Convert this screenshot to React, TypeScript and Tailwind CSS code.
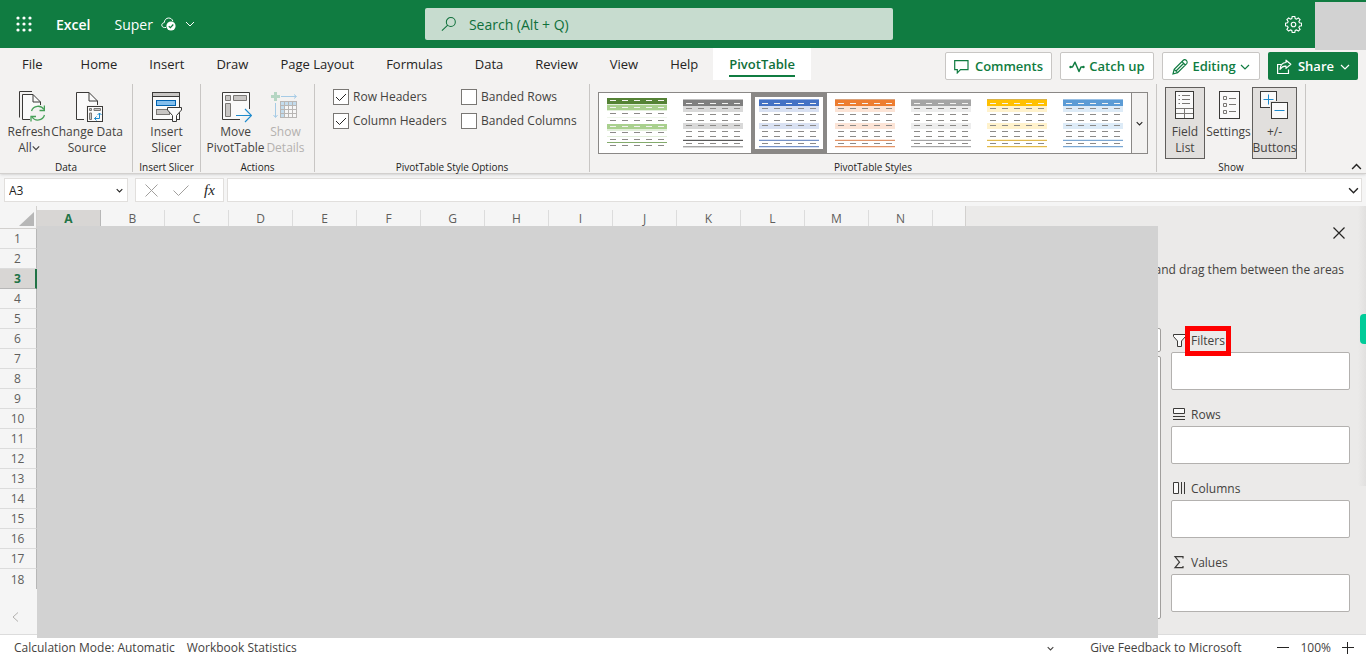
import React from "react";

const columns = ["A", "B", "C", "D", "E", "F", "G", "H", "I", "J", "K", "L", "M", "N"];
const rows = Array.from({ length: 18 }, (_, i) => i + 1);
const tabs = ["Home", "Insert", "Draw", "Page Layout", "Formulas", "Data", "Review", "View", "Help"];

const Chevron = ({ size = 10, width = 1, up = false }: { size?: number; width?: number; up?: boolean }) => (
  <svg width={size} height={size} viewBox="0 0 10 10" fill="none" stroke="currentColor" strokeWidth={width} className="shrink-0">
    <path d={up ? "M1 7.2 5 3.2 9 7.2" : "M1 3 5 7 9 3"} />
  </svg>
);

/* ---------- top bar ---------- */

const Header = () => (
  <header className="relative z-20 grid h-12 shrink-0 grid-cols-[425fr_468fr_473fr] items-center bg-[#107c41] text-white">
    <div className="flex items-center pl-4">
      <button aria-label="App launcher" className="mr-6">
        <svg width="16" height="16" viewBox="0 0 16 16" fill="white">
          {[2, 8, 14].map((y) =>
            [2, 8, 14].map((x) => <circle key={`${x}-${y}`} cx={x} cy={y} r="1.6" />)
          )}
        </svg>
      </button>
      <span className="mr-6 text-[14px] font-semibold">Excel</span>
      <button className="flex items-center text-[14px]">
        Super
        <svg className="ml-2" width="16" height="16" viewBox="0 0 16 16" fill="none">
          <path d="M5 11.5H3.4C1.8 11.5.8 10.4.8 9.1c0-1.4 1-2.3 2.4-2.4C3.4 4 5.2 2 7.700 2c2 0 3.600 1.200 4.200 3.200" stroke="white" />
          <circle cx="10" cy="10" r="4.6" fill="white" />
          <path d="M7.8 10.2 9.4 11.7 12.3 8.5" stroke="#107c41" strokeWidth="1.2" />
        </svg>
        <span className="ml-2">
          <Chevron />
        </span>
      </button>
    </div>
    <label className="flex h-8 items-center gap-3 rounded-xs bg-[#c7dccf] px-4 text-[#0f703b]">
      <svg width="17" height="16" viewBox="0 0 17 16" fill="none" stroke="currentColor" strokeWidth="1.1">
        <circle cx="10.5" cy="5.8" r="4.8" />
        <path d="M7.2 9.3 1 15.2" />
      </svg>
      <input
        aria-label="Search"
        placeholder="Search (Alt + Q)"
        className="w-full bg-transparent text-[14px] outline-none placeholder:text-[#0f703b]"
      />
    </label>
    <div className="flex justify-end pr-16">
      <button aria-label="Settings">
        <svg width="17" height="17" viewBox="0 0 24 24" fill="none" stroke="white" strokeWidth="1.6">
          <path d="M10.2 1.500h3.600l.6 3 1.800.8 2.600-1.700 2.500 2.500-1.700 2.600.8 1.800 3 .6v3.600l-3 .6-.8 1.800 1.700 2.600-2.500 2.500-2.600-1.700-1.800.8-.6 3h-3.600l-.6-3-1.800-.8-2.600 1.700-2.500-2.500 1.700-2.600-.8-1.800-3-.6v-3.600l3-.6.8-1.800-1.700-2.600 2.500-2.500 2.600 1.700 1.800-.8z" transform="translate(0 -.9)" />
          <circle cx="12" cy="12" r="3.2" />
        </svg>
      </button>
    </div>
    <div className="absolute top-0.5 right-0 h-12 w-[51px] bg-[#d2d2d2]" />
  </header>
);

const TabRow = () => (
  <div className="flex h-[34px] items-start text-[#252423]">
    <nav className="flex h-8 text-[13px]">
      <button className="pt-0.5 pr-[22px] pl-[22px]">File</button>
      {tabs.map((t) => (
        <button key={t} className="px-4 pt-0.5 whitespace-nowrap">
          {t}
        </button>
      ))}
      <button className="-ml-px bg-white px-4 font-semibold text-[#0f703b]">
        <span className="inline-block border-b-2 border-[#107c41] pt-1">PivotTable</span>
      </button>
    </nav>
    <div className="ml-auto flex gap-2 pt-1 pr-2 text-[13px] font-semibold text-[#107c41]">
      <button className="flex h-7 w-[107px] items-center justify-center gap-1.5 rounded-xs border border-[#c8c6c4] bg-white pt-px">
        <svg width="15" height="14" viewBox="0 0 15 14" fill="none" stroke="currentColor" strokeWidth="1.2">
          <path d="M.7.7H14v9H6.500L3.300 12.900V9.700H.7z" />
        </svg>
        Comments
      </button>
      <button className="flex h-7 w-[94px] items-center justify-center gap-1 rounded-xs border border-[#c8c6c4] bg-white pt-px whitespace-nowrap">
        <svg width="16" height="12" viewBox="0 0 16 12" fill="none" stroke="currentColor" strokeWidth="1.5">
          <path d="M1.5 6H3.500L6 1.200 10 10.500 12 6H14" strokeLinejoin="round" />
          <circle cx="1.5" cy="6" r="1.2" fill="currentColor" stroke="none" />
          <circle cx="14.5" cy="6" r="1.2" fill="currentColor" stroke="none" />
        </svg>
        Catch up
      </button>
      <button className="flex h-7 w-[98px] items-center justify-center gap-1 rounded-xs border border-[#c8c6c4] bg-white pt-px">
        <svg width="16" height="16" viewBox="0 0 16 16" fill="none" stroke="currentColor" strokeWidth="1.2">
          <path d="M1 15 2.2 10.3 11.3 1.3C12.1.5 13.3.5 14.2 1.3S15.4 3.8 14.7 4.6L5.6 13.7zM10 2.700 13.300 6M2.200 10.300 5.600 13.700M4 12 12 4" />
        </svg>
        Editing
        <Chevron width={1.2} />
      </button>
      <button className="flex h-7 w-[90px] items-center justify-center gap-1.5 rounded-xs bg-[#107c41] pt-px text-white">
        <svg width="16" height="16" viewBox="0 0 16 16" fill="none" stroke="currentColor" strokeWidth="1.2">
          <path d="M5 5.5H1.600V14.500H12.500V10.500" />
          <path d="M10 1.2 14.8 5.3 10 9.4V7.2C7.5 7 5.5 8.2 4 10.3 4.3 6.5 6.5 3.7 10 3.5z" strokeLinejoin="round" />
        </svg>
        Share
        <Chevron width={1.2} />
      </button>
    </div>
  </div>
);

/* ---------- ribbon icons ---------- */

const Icon = ({ children }: { children: React.ReactNode }) => (
  <svg width="32" height="32" viewBox="0 0 32 32" fill="none" stroke="#3b3a38" className="mb-px shrink-0">
    {children}
  </svg>
);

const RefreshIcon = () => (
  <Icon>
    <path d="M6.5 26.5V.5H19" />
    <path d="M17 28.5H9.500V3.500H20L27.500 11V14" fill="#fafafa" />
    <path d="M20 3.500V11H27.500" />
    <circle cx="25" cy="22" r="8" fill="#f3f2f1" stroke="none" />
    <path d="M18.5 20A7 7 0 0 1 31 18.500M31.500 24A7 7 0 0 1 19 26" stroke="#46a058" strokeWidth="1.3" />
    <path d="M31.400 14.500V19.500H26.500M18 30.500V25.500H23" stroke="#46a058" strokeWidth="1.3" />
  </Icon>
);

const SourceIcon = () => (
  <Icon>
    <path d="M13 28.500H5.500V1.500H18L26.500 10V14" fill="#fafafa" />
    <path d="M18 1.500V10H26.500" />
    <rect x="15" y="14" width="17" height="18" fill="#f3f2f1" stroke="none" />
    <rect x="16.500" y="15.500" width="15" height="15" fill="#fafafa" />
    <path d="M18.500 17.500H20.500V19.500H18.500zM23 17.500H29.500V19.500H23zM18.500 22H20.500V28.500H18.500z" fill="#c8c6c4" stroke="#797774" />
    <path d="M23.500 27.500H28.500V22M25.500 25.500 23.500 27.500 25.500 29.500M26.500 24 28.500 22 30.500 24" stroke="#1e8bcd" />
  </Icon>
);

const SlicerIcon = () => (
  <Icon>
    <rect x="1.500" y="1.500" width="27" height="27" fill="#fafafa" />
    <rect x="1.500" y="1.500" width="27" height="4" fill="#c8c6c4" />
    <rect x="5.500" y="9.500" width="19" height="5" fill="#83beec" stroke="#0063b1" />
    <rect x="5.500" y="18.500" width="13" height="5" fill="#c8c6c4" stroke="#797774" />
    <path d="M16.500 16.500H30.500V19L25.500 24.500V30.500H21.500V24.500L16.500 19z" fill="#fafafa" />
  </Icon>
);

const MoveIcon = () => (
  <Icon>
    <path d="M20 28.500H2.500V1.500H29.500V18" fill="#fafafa" />
    <path d="M5.500 4.500H10.500V9.500H5.500zM13.500 4.500H26.500V9.500H13.500zM5.500 12.500H10.500V25.500H5.500z" fill="#c8c6c4" stroke="#797774" />
    <path d="M16 24.500H31M25 18 31.500 24.500 25 31" stroke="#1e8bcd" strokeWidth="1.2" />
  </Icon>
);

const DetailsIcon = () => (
  <Icon>
    <path d="M5.500 1V10M1 5.500H10" stroke="#b5d6c3" strokeWidth="3" />
    <path d="M11 5.500H26M24 3.500 26.500 5.500 24 7.500M5.500 12V26M3.500 24 5.500 26.500 7.500 24" stroke="#a5cbe6" />
    <rect x="10.500" y="10.500" width="16" height="16" fill="#f7f7f7" stroke="#b8b6b4" />
    <path d="M11 11H14V26H11zM11 11H26V14H11z" fill="#c3dced" stroke="none" />
    <path d="M14.500 10V27M18.500 10V27M22.500 10V27M10 14.500H27M10 18.500H27M10 22.500H27" stroke="#b8b6b4" />
  </Icon>
);

const FieldListIcon = () => (
  <Icon>
    <rect x="6.500" y=".5" width="18" height="27" fill="#fafafa" />
    <path d="M9.500 4.500H11M13 4.500H21M9.500 8.500H11M13 8.500H21M9.500 12.500H11M13 12.500H21M7 17.500H24M7 22.500H24M15.500 18V27" stroke="#797774" />
  </Icon>
);

const SettingsIcon = () => (
  <Icon>
    <rect x="6.500" y=".5" width="20" height="27" fill="#fafafa" />
    <path d="M10.500 5.500H13.500V8.500H10.500zM16 7.500H23M10.500 12.500H13.500V15.500H10.500zM16 13.500H23M10.500 19.500H13.500V22.500H10.500zM16 20.500H23" stroke="#797774" />
  </Icon>
);

const PlusMinusIcon = () => (
  <Icon>
    <rect x="1.500" y=".5" width="16" height="16" fill="#fafafa" />
    <path d="M4.500 8.500H14.500M9.500 3.500V13.500" stroke="#1e8bcd" />
    <rect x="11" y="10" width="18" height="18" fill="#e1dfdd" stroke="none" />
    <rect x="12.500" y="11.500" width="16" height="16" fill="#fafafa" />
    <path d="M15.500 19.500H25.500" stroke="#1e8bcd" />
  </Icon>
);

/* ---------- ribbon ---------- */

type ButtonProps = {
  icon: React.ReactNode;
  lines: React.ReactNode[];
  width: string;
  pressed?: boolean;
  disabled?: boolean;
};

const RibbonButton = ({ icon, lines, width, pressed, disabled }: ButtonProps) => (
  <button
    disabled={disabled}
    className={`flex h-[72px] shrink-0 flex-col items-center border pt-[3px] text-[12px] leading-4 whitespace-nowrap ${width} ${
      pressed ? "border-[#605e5c] bg-[#e1dfdd]" : "border-transparent"
    } ${disabled ? "text-[#b3b1af]" : "text-[#444240]"}`}
  >
    {icon}
    {lines.map((l, i) => (
      <span key={i} className="flex items-center">
        {l}
      </span>
    ))}
  </button>
);

const Group = ({ label, width, children }: { label: string; width: string; children: React.ReactNode }) => (
  <section className={`flex h-[88px] shrink-0 flex-col border-r border-[#c8c6c4] ${width}`}>
    <div className="flex flex-1 justify-center pt-[3px]">{children}</div>
    <h2 className="text-center text-[10px] leading-[10px] text-[#252423]">{label}</h2>
  </section>
);

const Check = ({ label, checked }: { label: string; checked?: boolean }) => (
  <label className="flex h-6 items-center gap-1 text-[12px] text-[#444240]">
    <span className="relative flex">
      <input
        type="checkbox"
        defaultChecked={checked}
        className="peer size-4 appearance-none border border-[#797774] bg-white"
      />
      <svg className="absolute inset-0 hidden peer-checked:block" width="16" height="16" viewBox="0 0 16 16" fill="none" stroke="#252423">
        <path d="M3 8 6.500 11.500 13 5" />
      </svg>
    </span>
    {label}
  </label>
);

const Dashes = ({ y, color }: { y: number; color: string }) => (
  <path d={`M3 ${y}h6m6 0h6m6 0h6m6 0h6m6 0h6`} stroke={color} />
);

type Style = { head: string; top: string; band: string; line: string; last: string };

const styles: Style[] = [
  { head: "#7f7f7f", top: "#bfbfbf", band: "#d9d9d9", line: "#595959", last: "#a6a6a6" },
  { head: "#4472c4", top: "#8ea9db", band: "#d9e1f2", line: "#7491c6", last: "#7491c6" },
  { head: "#ed7d31", top: "#d9a27c", band: "#fce4d6", line: "#e09468", last: "#e09468" },
  { head: "#a5a5a5", top: "#c9c9c9", band: "#ededed", line: "#a5a5a5", last: "#a5a5a5" },
  { head: "#ffc000", top: "#d9b44a", band: "#fff2cc", line: "#dfb84c", last: "#dfb84c" },
  { head: "#5b9bd5", top: "#9bc2e6", band: "#ddebf7", line: "#7aa6d2", last: "#7aa6d2" },
];

const StylePreview = ({ s }: { s: Style }) => (
  <svg width="60" height="60" viewBox="0 0 60 60" className="shrink-0">
    <rect y="6" width="60" height="1" fill={s.top} />
    <rect y="7" width="60" height="6" fill={s.head} />
    <rect y="13" width="60" height="6" fill={s.band} />
    <rect y="30" width="60" height="6" fill={s.band} />
    <Dashes y={10.5} color="#f3f2f1" />
    {[15.5, 21.5, 27.5, 32.5, 38.5, 43.5, 50.5].map((y) => (
      <Dashes key={y} y={y} color="#8c8a88" />
    ))}
    <rect y="46" width="60" height="1" fill={s.band} />
    <rect y="47" width="60" height="1" fill={s.line} />
    <rect y="53" width="60" height="1" fill={s.last} />
    <rect y="54" width="60" height="1" fill={s.band} />
  </svg>
);

const GreenPreview = () => (
  <svg width="60" height="60" viewBox="0 0 60 60" className="shrink-0">
    <rect y="5" width="60" height="6" fill="#548235" />
    <rect y="11" width="60" height="1" fill="#e2efda" />
    <rect y="12" width="60" height="5" fill="#a9d08e" />
    <rect y="17" width="60" height="1" fill="#e2efda" />
    <rect y="24" width="60" height="1" fill="#eef5ea" />
    <rect y="31" width="60" height="5" fill="#a9d08e" />
    <rect y="36" width="60" height="2" fill="#e2efda" />
    <rect y="43" width="60" height="1" fill="#e2efda" />
    <rect y="49" width="60" height="1" fill="#84ab6c" />
    {[7.5, 14.5, 33.5].map((y) => (
      <Dashes key={y} y={y} color="#f3f2f1" />
    ))}
    {[20.5, 27.5, 39.5, 46.5, 52.5].map((y) => (
      <Dashes key={y} y={y} color="#8c8a88" />
    ))}
  </svg>
);

const Ribbon = () => (
  <div className="relative z-10 h-[126px] shrink-0 border-b border-[#d2d0ce] bg-[#f3f2f1] shadow-sm">
    <TabRow />
    <div className="flex pt-0.5">
      <Group label="Data" width="w-[133px]">
        <div className="mr-4 flex">
          <RibbonButton
            width="w-[58px]"
            icon={<RefreshIcon />}
            lines={["Refresh", <React.Fragment key="all">All<Chevron size={8} width={1.5} /></React.Fragment>]}
          />
          <RibbonButton width="w-[58px]" icon={<SourceIcon />} lines={["Change Data", "Source"]} />
        </div>
      </Group>
      <Group label="Insert Slicer" width="w-[68px]">
        <RibbonButton width="w-[50px]" icon={<SlicerIcon />} lines={["Insert", "Slicer"]} />
      </Group>
      <Group label="Actions" width="w-[114px]">
        <RibbonButton width="w-[56px]" icon={<MoveIcon />} lines={["Move", "PivotTable"]} />
        <RibbonButton width="w-[44px]" icon={<DetailsIcon />} lines={["Show", "Details"]} disabled />
      </Group>
      <Group label="PivotTable Style Options" width="w-[275px]">
        <div className="-mt-0.5 grid w-full grid-cols-[128px_1fr] content-start pl-[18px]">
          <Check label="Row Headers" checked />
          <Check label="Banded Rows" />
          <Check label="Column Headers" checked />
          <Check label="Banded Columns" />
        </div>
      </Group>
      <Group label="PivotTable Styles" width="w-[567px]">
        <div className="mt-[5px] flex h-[62px] border border-[#8a8886] bg-white">
          <button aria-label="Light green style" className="flex w-[76px] items-center justify-center">
            <GreenPreview />
          </button>
          {styles.map((s, i) => (
            <button key={s.head} aria-label={`Style ${i + 2}`} className="relative flex w-[76px] items-center justify-center">
              <StylePreview s={s} />
              {i === 1 && <span className="absolute inset-0 border-4 border-[#8a8886]" />}
            </button>
          ))}
          <button aria-label="More styles" className="flex w-4 items-center justify-center border-l border-[#8a8886] bg-[#f3f2f1] text-[#252423]">
            <Chevron size={7} width={1.5} />
          </button>
        </div>
      </Group>
      <Group label="Show" width="w-[149px]">
        <RibbonButton width="w-[40px]" icon={<FieldListIcon />} lines={["Field", "List"]} pressed />
        <RibbonButton width="w-[47px]" icon={<SettingsIcon />} lines={["Settings"]} />
        <RibbonButton width="w-[45px]" icon={<PlusMinusIcon />} lines={["+/-", "Buttons"]} pressed />
      </Group>
      <button aria-label="Collapse ribbon" className="mr-1 ml-auto self-end text-[#252423]">
        <Chevron size={11} width={1.3} up />
      </button>
    </div>
  </div>
);

/* ---------- sheet ---------- */

const FormulaBar = () => (
  <div className="flex h-8 shrink-0 items-center bg-[#f5f5f5] px-1 text-[#252423]">
    <div className="mr-[7px] flex h-6 w-[124px] items-center border border-[#e1dfdd] bg-white pr-1">
      <input aria-label="Name box" defaultValue="A3" className="w-full bg-transparent pt-0.5 pl-1 text-[12px] outline-none" />
      <Chevron size={7} width={1.5} />
    </div>
    <div className="mr-[3px] flex h-6 w-[89px] items-center gap-[15px] border border-[#e1dfdd] bg-white px-[9px] text-[#a19f9d]">
      <button aria-label="Cancel">
        <svg width="13" height="13" viewBox="0 0 13 13" fill="none" stroke="currentColor">
          <path d="M.5.5 12.500 12.500M12.500.5.5 12.500" />
        </svg>
      </button>
      <button aria-label="Enter">
        <svg width="16" height="13" viewBox="0 0 16 13" fill="none" stroke="currentColor">
          <path d="M.5 6.500 5.500 11.500 15.500 1.500" />
        </svg>
      </button>
      <button className="font-['Liberation_Serif',serif] text-[15px] leading-4 text-[#252423] italic">fx</button>
    </div>
    <div className="flex h-6 flex-1 items-center border border-[#e1dfdd] bg-white pr-0.5">
      <input aria-label="Formula" className="w-full bg-transparent px-1 text-[12px] outline-none" />
      <Chevron size={11} width={1.3} />
    </div>
  </div>
);

const Sheet = () => (
  <div className="flex min-w-0 flex-1 flex-col bg-[#f5f5f5]">
    <table className="w-full table-fixed border-separate border-spacing-0 text-[12px] text-[#605e5c]">
      <thead>
        <tr>
          <th className="h-[23px] w-[37px] border-r border-b border-[#d2d0ce] p-0">
            <svg className="mt-1 ml-auto" width="17" height="17" viewBox="0 0 17 17" fill="#b7b7b7">
              <path d="M15 1V15H0z" />
            </svg>
          </th>
          {columns.map((c) => (
            <th key={c} scope="col" className="w-16 p-0 pt-1">
              <div
                className={
                  c === "A"
                    ? "h-[19px] border-r border-[#b7b7b7] bg-[#d8d6d4] font-bold text-[#217346]"
                    : "h-[19px] border-r border-[#dcdcdc] font-normal"
                }
              >
                {c}
              </div>
            </th>
          ))}
          <th className="p-0" />
        </tr>
      </thead>
      <tbody>
        {rows.map((r) => (
          <tr key={r}>
            <th
              scope="row"
              className={
                r === 3
                  ? "h-5 border-r-2 border-b border-b-[#b7b7b7] border-r-[#217346] bg-[#d8d6d4] p-0 pt-px leading-4 font-bold text-[#217346]"
                  : `h-5 border-r border-r-[#b7b7b7] p-0 pt-px pr-px leading-4 font-normal ${r < 18 ? "border-b border-b-[#dcdcdc]" : ""}`
              }
            >
              {r}
            </th>
            <td colSpan={15} className="p-0" />
          </tr>
        ))}
      </tbody>
    </table>
    <button aria-label="Previous sheet" className="mt-[22px] ml-2.5 self-start text-[#b3b1af]">
      <svg width="11" height="12" viewBox="0 0 11 12" fill="none" stroke="currentColor">
        <path d="M8 1.500 3 6 8 10.500" />
      </svg>
    </button>
  </div>
);

const areas = [
  {
    name: "Filters",
    icon: <path d="M.5.5H12.500V2.500L8.500 7V12.500H4.500V7L.5 2.500z" fill="#fafafa" />,
  },
  {
    name: "Rows",
    icon: <path d="M.5.5H11.500V5.500H.5zM0 8.500H12M0 11.500H12" fill="#fafafa" />,
  },
  {
    name: "Columns",
    icon: <path d="M.5.5H5.500V11.500H.5zM8.500 0V12M11.500 0V12" fill="#fafafa" />,
  },
  {
    name: "Values",
    icon: <path d="M10 2.500V.7H2L6.500 6.200 2 11.700H10V10" strokeWidth="1.2" />,
  },
];

const FieldPane = () => (
  <aside className="relative flex w-[401px] shrink-0 flex-col border-l border-[#d2d0ce] bg-[#ebeae9] pr-4 text-[12px] text-[#444240]">
    <button aria-label="Close" className="mt-[21px] mr-[5px] self-end">
      <svg width="12" height="12" viewBox="0 0 12 12" fill="none" stroke="#252423" strokeWidth="1.2">
        <path d="M.5.5 11.500 11.500M11.500.5.5 11.500" />
      </svg>
    </button>
    <p className="mt-[23px] mr-1.5 text-right leading-4">t and drag them between the areas</p>
    <div className="mt-[50px] flex gap-2.5 pl-4">
      <div className="flex flex-1 flex-col gap-1">
        <input aria-label="Search fields" className="h-6 rounded-xs border border-[#a19f9d] bg-white px-2" />
        <div className="h-[263px] rounded-xs border border-[#a19f9d] bg-white" />
      </div>
      <div className="flex w-[179px] flex-col gap-3">
        {areas.map((a) => (
          <section key={a.name}>
            <h3 className="flex h-6 items-center gap-[5px] pt-px pl-0.5 font-medium">
              <svg width="13" height="13" viewBox="0 0 13 13" fill="none" stroke="#3b3a38">
                {a.icon}
              </svg>
              <span className="relative">
                {a.name}
                {a.name === "Filters" && <span className="absolute -inset-1.5 border-[5px] border-[#ff0000]" />}
              </span>
            </h3>
            <div className="h-[38px] rounded-xs border border-[#b3b1af] bg-white" />
          </section>
        ))}
      </div>
    </div>
    <div className="absolute top-0 right-0 h-[280px] w-2 bg-linear-to-r from-transparent to-[#e1e0df]" />
    <button aria-label="Open assistant" className="absolute top-[108px] right-0 h-[30px] w-1.5 rounded-l bg-[#00cc99]" />
  </aside>
);

const StatusBar = () => (
  <footer className="flex h-[22px] shrink-0 items-center bg-white pt-1 pr-3 pl-3.5 text-[12px] text-[#444240]">
    <button className="mr-3">Calculation Mode: Automatic</button>
    <button>Workbook Statistics</button>
    <div className="ml-auto flex items-center">
      <button aria-label="More status options" className="mr-9">
        <Chevron size={7} width={1.5} />
      </button>
      <a href="#feedback" className="mr-9">
        Give Feedback to Microsoft
      </a>
      <button aria-label="Zoom out">
        <svg width="12" height="12" viewBox="0 0 12 12" stroke="#252423">
          <path d="M0 5.500H12" />
        </svg>
      </button>
      <span className="mx-[11px]">100%</span>
      <button aria-label="Zoom in">
        <svg width="12" height="12" viewBox="0 0 12 12" stroke="#252423">
          <path d="M0 5.500H12M5.500 0V12" />
        </svg>
      </button>
    </div>
  </footer>
);

const App = () => {
  return (
    <div className="flex h-screen flex-col overflow-hidden bg-white font-['Open_Sans',sans-serif]">
      <Header />
      <Ribbon />
      <FormulaBar />
      <main className="relative flex min-h-0 flex-1 border-b border-[#dcdcdc]">
        <Sheet />
        <FieldPane />
        <div className="absolute top-5 right-52 -bottom-1 left-[37px] z-10 bg-[#d2d2d2]" />
      </main>
      <StatusBar />
    </div>
  );
};

export default App;
